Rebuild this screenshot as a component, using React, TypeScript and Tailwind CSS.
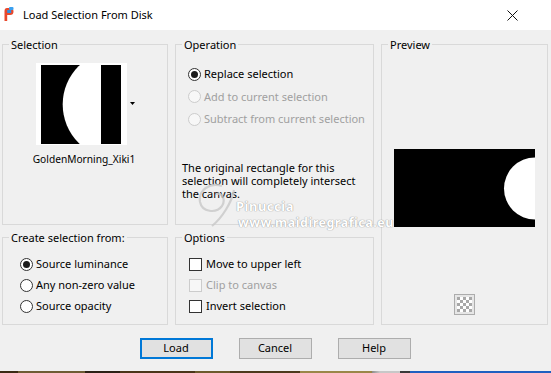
import React from "react";

const Radio = ({ checked = false, disabled = false }: { checked?: boolean; disabled?: boolean }) => (
  <span
    className={`flex items-center justify-center w-[13px] h-[13px] rounded-full border shrink-0 ${
      disabled ? "border-[#cccccc] bg-[#f7f7f7]" : "border-[#333333] bg-white"
    }`}
  >
    {checked && <span className="w-[7px] h-[7px] rounded-full bg-[#1b1b1b]" />}
  </span>
);

const Check = ({ disabled = false }: { disabled?: boolean }) => (
  <span
    className={`w-[13px] h-[13px] border shrink-0 ${
      disabled ? "border-[#cccccc] bg-[#f7f7f7]" : "border-[#333333] bg-white"
    }`}
  />
);

const Group = ({
  title,
  className,
  children,
}: {
  title: string;
  className: string;
  children?: React.ReactNode;
}) => (
  <fieldset className={`border border-[#d9d9d9] min-w-0 ${className}`}>
    <legend className="ml-[6px] px-[2px] leading-[15px]">{title}</legend>
    {children}
  </fieldset>
);

export default function App() {
  return (
    <div className="relative w-[551px] h-[373px] bg-[#f0f0f0] flex flex-col font-['Noto_Sans',sans-serif] text-[11px] text-black overflow-hidden">
      {/* Title bar */}
      <div className="h-[30px] bg-white flex items-center shrink-0">
        <svg width="10" height="15" viewBox="0 0 10 15" className="ml-[4px] mt-[-1px]">
          <path d="M0.5 4 Q0.5 1 3 1 H6 Q9.5 1 9.5 4.5 Q9.5 8 6 8 H3.2 V14 H0.5 Z" fill="#e8482c" />
          <rect x="3.2" y="3" width="4" height="3" fill="#2f8fe0" />
          <rect x="5" y="0" width="4.5" height="3" rx="1" fill="#3aa0f0" />
        </svg>
        <span className="ml-[9px] text-[11px] text-black">Load Selection From Disk</span>
        <svg width="11" height="11" viewBox="0 0 11 11" className="ml-auto mr-[33px]">
          <path d="M0.5 0.5 L10.5 10.5 M10.5 0.5 L0.5 10.5" stroke="#111" strokeWidth="1" />
        </svg>
      </div>

      {/* Body */}
      <div className="pt-[7px] pl-[2px] grid grid-cols-[166px_199px_167px] grid-rows-[188px_95px] gap-x-[7px] gap-y-[5px]">
        <Group title="Selection" className="h-[188px]">
          <div className="flex items-center mt-[11px] ml-[33px]">
            <svg width="91" height="82" viewBox="0 0 91 82">
              <defs>
                <clipPath id="thumbclip">
                  <rect x="5" y="2" width="60" height="79" />
                </clipPath>
              </defs>
              <rect x="0" y="0" width="91" height="82" fill="#ffffff" />
              <rect x="5" y="2" width="80" height="79" fill="#000000" />
              <circle cx="80.7" cy="41.5" r="54" fill="#ffffff" clipPath="url(#thumbclip)" />
            </svg>
            <svg width="6" height="4" viewBox="0 0 6 4" className="ml-[3px]">
              <path d="M0 0 H5 L2.5 3 Z" fill="#000" />
            </svg>
          </div>
          <div className="text-center mt-[7px] text-[10.2px] leading-[15px] pr-[2px]">GoldenMorning_Xiki1</div>
        </Group>

        <Group title="Operation" className="h-[188px]">
          <div className="flex flex-col mt-[11px] pl-[12px]">
            <div className="flex items-center h-[22.5px] gap-[3px]">
              <Radio checked />
              <span>Replace selection</span>
            </div>
            <div className="flex items-center h-[22.5px] gap-[3px] text-[#a0a0a0]">
              <Radio disabled />
              <span>Add to current selection</span>
            </div>
            <div className="flex items-center h-[22.5px] gap-[3px] text-[#a0a0a0]">
              <Radio disabled />
              <span>Subtract from current selection</span>
            </div>
          </div>
          <p className="mt-[30px] pl-[6px] leading-[13.3px] w-[190px]">
            The original rectangle for this
            <br />
            selection will completely intersect
            <br />
            the canvas.
          </p>
        </Group>

        <Group title="Preview" className="row-span-2 h-[288px]">
          <div className="flex flex-col items-center">
            <svg width="141" height="78" viewBox="0 0 141 78" className="mt-[97px]">
              <rect x="0" y="0" width="141" height="78" fill="#000" />
              <circle cx="141" cy="39.5" r="31" fill="#fff" />
            </svg>
            <div className="mt-[67px] w-[21px] h-[21px] border border-[#acacac] bg-[#e6e6e6] flex items-center justify-center">
              <svg width="15" height="15" viewBox="0 0 15 15">
                <rect width="15" height="15" fill="#ffffff" />
                {[0, 1, 2, 3, 4].map((r) =>
                  [0, 1, 2, 3, 4].map((c) =>
                    (r + c) % 2 === 0 ? (
                      <rect key={`${r}-${c}`} x={c * 3} y={r * 3} width="3" height="3" fill="#a8a8a8" />
                    ) : null
                  )
                )}
              </svg>
            </div>
          </div>
        </Group>

        <Group title="Create selection from:" className="h-[95px]">
          <div className="flex flex-col mt-[9px] pl-[17px]">
            <div className="flex items-center h-[21px] gap-[3px]">
              <Radio checked />
              <span>Source luminance</span>
            </div>
            <div className="flex items-center h-[21px] gap-[3px]">
              <Radio />
              <span>Any non-zero value</span>
            </div>
            <div className="flex items-center h-[21px] gap-[3px]">
              <Radio />
              <span>Source opacity</span>
            </div>
          </div>
        </Group>

        <Group title="Options" className="h-[95px]">
          <div className="flex flex-col mt-[9px] pl-[13px]">
            <div className="flex items-center h-[21px] gap-[4px]">
              <Check />
              <span>Move to upper left</span>
            </div>
            <div className="flex items-center h-[21px] gap-[4px] text-[#a0a0a0]">
              <Check disabled />
              <span>Clip to canvas</span>
            </div>
            <div className="flex items-center h-[21px] gap-[4px]">
              <Check />
              <span>Invert selection</span>
            </div>
          </div>
        </Group>
      </div>

      {/* Buttons */}
      <div className="flex justify-center gap-[26px] mt-[13px] pr-[1px]">
        <button className="w-[73px] h-[21px] border-2 border-[#0078d7] bg-[#e1e1e1] flex items-center justify-center">
          Load
        </button>
        <button className="w-[73px] h-[21px] border border-[#adadad] bg-[#e1e1e1] flex items-center justify-center">
          Cancel
        </button>
        <button className="w-[73px] h-[21px] border border-[#adadad] bg-[#e1e1e1] flex items-center justify-center">
          Help
        </button>
      </div>

      <div className="flex-1" />
      <div className="h-[2px] shrink-0 bg-[linear-gradient(90deg,#3b2a14_0,#3b2a14_18px,#6e5c34_18px,#6e5c34_85px,#2c2116_85px,#2c2116_120px,#4a3518_120px,#4a3518_195px,#6c5a2c_195px,#6c5a2c_230px,#4d3a1c_230px,#4d3a1c_300px,#9a8748_300px,#9a8748_372px,#8c8c8c_372px,#c8c8c8_380px,#c8c8c8_400px,#3a3a3a_400px,#3a3a3a_410px,#1f5fc0_410px)]" />

      {/* Watermark overlay */}
      <svg width="50" height="45" viewBox="0 0 50 45" className="absolute left-[192px] top-[182px] pointer-events-none">
        <path
          d="M30 4 C18 0 6 8 8 20 C10 30 24 32 30 24 C34 18 30 10 24 12 M42 8 C40 20 30 36 20 44"
          fill="none"
          stroke="#c8c8c8"
          strokeWidth="2.2"
          opacity="0.8"
        />
      </svg>
      <div className="absolute left-[236px] top-[198px] text-[13px] font-bold leading-[16px] text-white [text-shadow:0_0_1px_#999,0_0_1px_#999] tracking-[0.5px] pointer-events-none">
        Pinuccia
      </div>
      <div className="absolute left-[238px] top-[215px] text-[12.5px] font-bold leading-[16px] text-white [text-shadow:0_0_1px_#999,0_0_1px_#999] tracking-[0.5px] pointer-events-none">
        www.maidiregrafica.eu
      </div>
    </div>
  );
}
